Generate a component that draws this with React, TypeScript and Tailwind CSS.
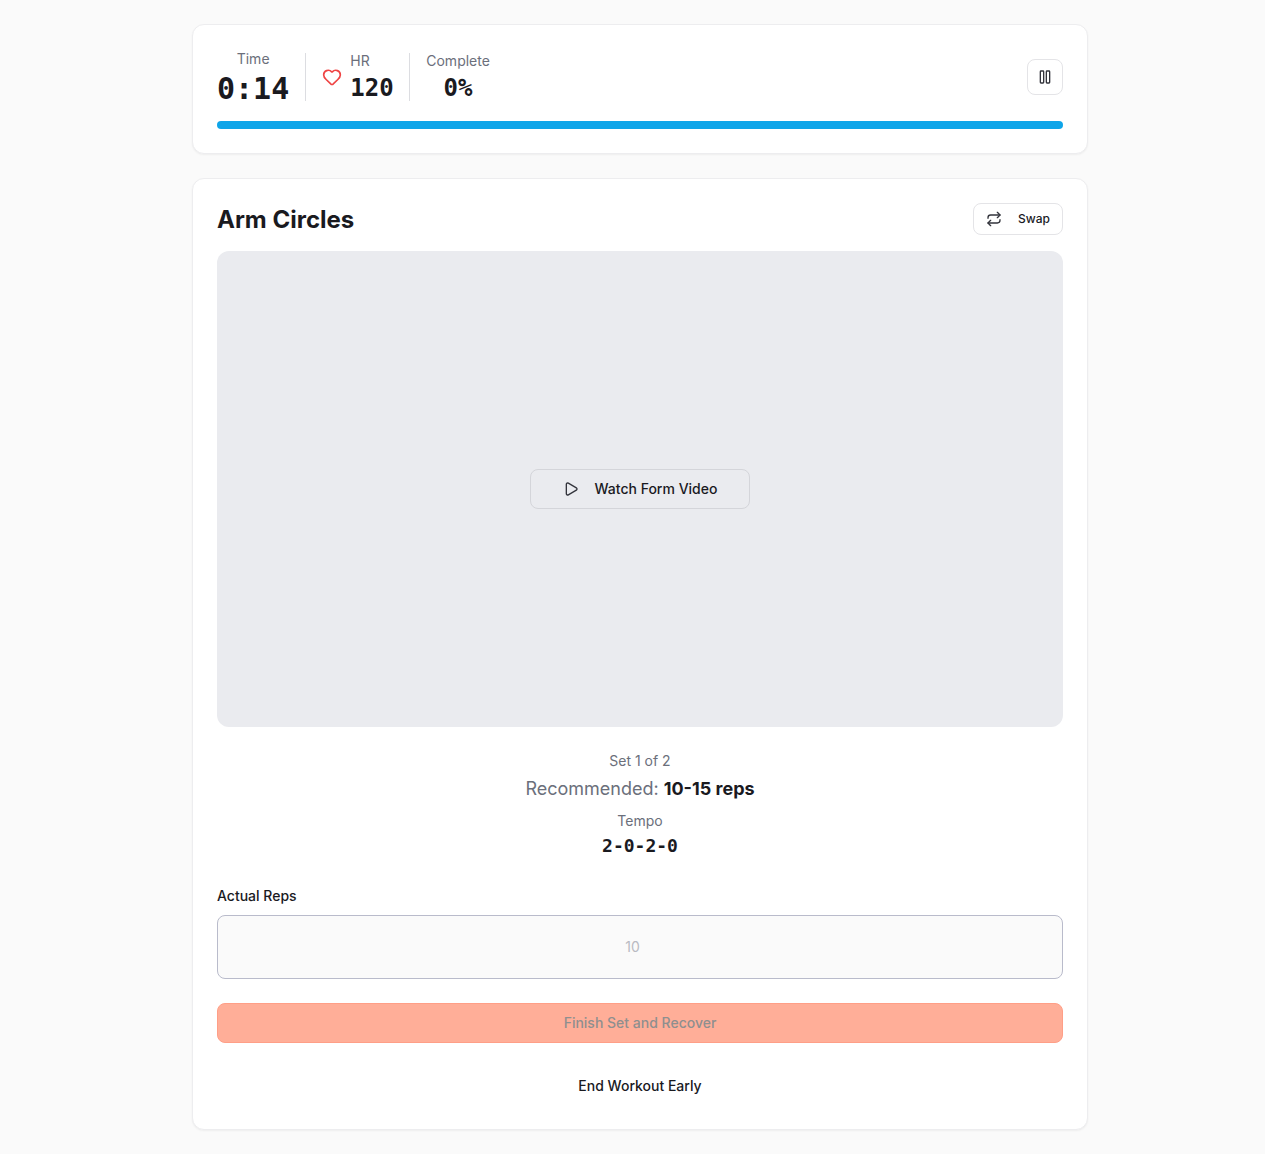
import { Heart, Pause, Play, Repeat } from "lucide-react";

const cardClass = "rounded-xl border border-[#ededef] bg-white p-6 shadow-[0_1px_2px_rgba(0,0,0,0.05)]";
const monoFont = "font-['DejaVu_Sans_Mono','Liberation_Mono',monospace]";

function Divider() {
  return <div className="h-12 w-px bg-[#dcdde1]" />;
}

function StatsCard() {
  return (
    <div className={cardClass}>
      <div className="mb-4 flex items-center justify-between">
        <div className="flex items-center gap-4">
          <div className="text-center">
            <div className="text-sm leading-5 text-[#6b6f7b]">Time</div>
            <div className={`${monoFont} pt-1 text-3xl leading-8 font-bold text-[#1a1a1f]`}>0:14</div>
          </div>
          <Divider />
          <div className="flex items-center gap-2">
            <Heart size={20} className="text-[#ef4444]" />
            <div className="w-[43px]">
              <div className="text-sm leading-5 text-[#6b6f7b]">HR</div>
              <div className={`${monoFont} pt-[2px] text-2xl leading-[30px] font-bold text-[#1a1a1f]`}>120</div>
            </div>
          </div>
          <Divider />
          <div className="text-center">
            <div className="text-sm leading-5 text-[#6b6f7b]">Complete</div>
            <div className={`${monoFont} pt-[2px] text-2xl leading-[30px] font-bold text-[#1a1a1f]`}>0%</div>
          </div>
        </div>
        <button className="flex h-9 w-9 items-center justify-center rounded-lg border border-[#e4e4e7] bg-white text-[#33343c]">
          <Pause size={16} />
        </button>
      </div>
      <div className="h-2 w-full rounded-full bg-[#0ea5e9]" />
    </div>
  );
}

function ExerciseCard() {
  return (
    <div className={cardClass}>
      <div className="mb-4 flex items-center justify-between">
        <h2 className="pt-px text-2xl leading-[31px] font-bold text-[#1a1a1f]">Arm Circles</h2>
        <button className="flex h-8 items-center gap-4 rounded-lg border border-[#e4e4e7] bg-white px-3 text-xs font-medium text-[#1a1a1f]">
          <Repeat size={16} className="text-[#33343c]" />
          Swap
        </button>
      </div>

      <div className="mb-6 flex aspect-video w-full items-center justify-center rounded-xl bg-[#eaebef]">
        <button className="flex h-10 items-center gap-4 rounded-lg border border-[#d4d5da] px-8 text-sm font-medium text-[#1a1a1f]">
          <Play size={16} className="text-[#33343c]" />
          Watch Form Video
        </button>
      </div>

      <div className="mb-[26px] text-center">
        <p className="mb-1 text-sm text-[#6b6f7b]">Set 1 of 2</p>
        <p className="mb-2 text-lg text-[#6b6f7b]">
          Recommended: <span className="font-bold text-[#1a1a1f]">10-15 reps</span>
        </p>
        <p className="text-sm text-[#6b6f7b]">Tempo</p>
        <p className={`${monoFont} text-lg leading-[29px] font-bold text-[#1a1a1f]`}>2-0-2-0</p>
      </div>

      <label className="mb-[9px] block text-sm font-medium text-[#1a1a1f]">Actual Reps</label>
      <input
        type="number"
        placeholder="10"
        className="mb-6 block h-16 w-full rounded-lg border border-[#b9bbcb] bg-[#fafafa] px-3 text-center text-sm placeholder:text-[#b9bac2]"
      />

      <button className="mb-6 h-10 w-full rounded-lg border border-[#ff9f87] bg-[#ffae98] text-sm font-medium text-[#8f8f8f]">
        Finish Set and Recover
      </button>

      <button className="h-[38px] w-full text-sm font-medium text-[#1a1a1f]">End Workout Early</button>
    </div>
  );
}

export default function App() {
  return (
    <div className="min-h-screen bg-[#fafafa] py-6 font-['Inter',sans-serif]">
      <div className="ml-[192px] flex w-[896px] flex-col gap-6">
        <StatsCard />
        <ExerciseCard />
      </div>
    </div>
  );
}
